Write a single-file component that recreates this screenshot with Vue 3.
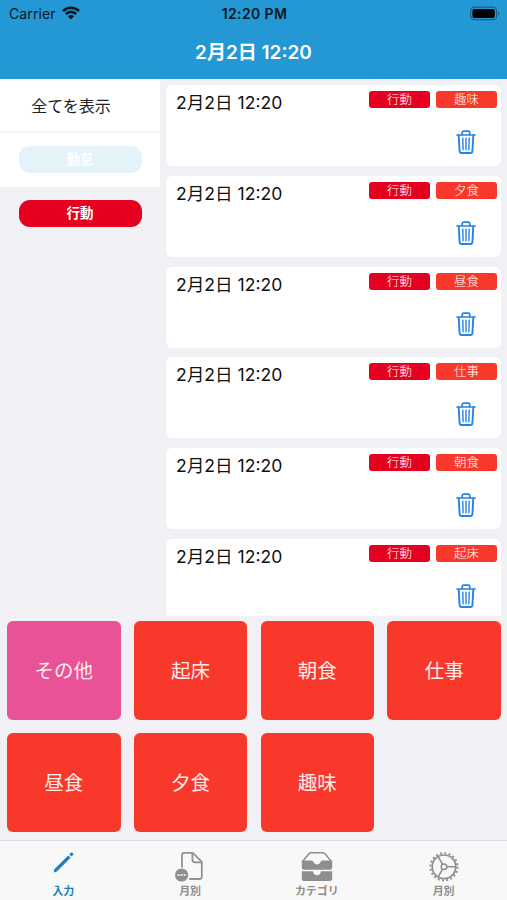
<template>
  <div class="phone">
    <header class="header">
      <div class="status">
        <div class="carrier">
          <span>Carrier</span>
          <svg class="wifi" viewBox="0 0 18 14">
            <path d="M1 5a11.300 11.300 0 0 1 16 0M3.800 8a7.400 7.400 0 0 1 10.400 0" fill="none" stroke="#071822" stroke-width="2.600" />
            <path d="M5.900 10.200a4.400 4.400 0 0 1 6.200 0L9 13.400z" fill="#071822" />
          </svg>
        </div>
        <span class="clock">12:20 PM</span>
        <svg class="battery" viewBox="0 0 30 14">
          <rect x="0.6" y="0.1" width="26" height="12.6" rx="3.8" fill="none" stroke="#17618a" stroke-width="1.2" />
          <rect x="2.4" y="1.9" width="22.4" height="9" rx="2" fill="#000" />
          <path d="M28 4.500v4c1.6-.6 1.6-3.4 0-4z" fill="#17618a" />
        </svg>
      </div>
      <h1 class="title">2月2日 12:20</h1>
    </header>

    <main class="main">
      <aside class="side">
        <button class="side-row all" @click="selected = ''">全てを表示</button>
        <button
          v-for="g in groups"
          :key="g.name"
          class="side-row"
          :class="g.type"
          @click="selected = g.name"
        >
          <span class="pill">{{ g.name }}</span>
        </button>
      </aside>

      <section class="list">
        <article v-for="r in shownRecords" :key="r.id" class="card">
          <span class="date">{{ r.date }}</span>
          <div class="right">
            <div class="tags">
              <span class="tag group">{{ r.group }}</span>
              <span class="tag">{{ r.name }}</span>
            </div>
            <button class="trash" aria-label="削除" @click="removeRecord(r.id)">
              <svg viewBox="0 0 20 24" fill="none" stroke="#2583e4" stroke-linecap="round" stroke-linejoin="round">
                <path d="M1 5h18" stroke-width="1.7" />
                <path d="M6.2 4.6V2.8Q6.2 1.2 7.8 1.2h4.4q1.6 0 1.600 1.600v1.800" stroke-width="1.7" />
                <path d="M2.7 5.400l.9 15.600q.1 2 2 2h8.8q1.9 0 2-2l.9-15.600" stroke-width="1.9" />
                <path d="M6.8 8.2l.3 11.6M10 8.2v11.6M13.2 8.2l-.3 11.6" stroke-width="1.4" />
              </svg>
            </button>
          </div>
        </article>
      </section>
    </main>

    <section class="tiles">
      <button
        v-for="a in actions"
        :key="a"
        class="tile"
        :class="{ other: a === 'その他' }"
        @click="addRecord(a)"
      >{{ a }}</button>
    </section>

    <nav class="tabbar">
      <a class="tab active">
        <svg viewBox="0 0 32 32">
          <path d="M6.600 25.400L7.400 22.200 21.200 8.400l2.400 2.400L9.800 24.400z" fill="#1580c3" />
          <path d="M22.300 7.300l1.500-1.500q1-.8 2 .2t.2 2L24.500 9.500z" fill="#1580c3" />
        </svg>
        <span>入力</span>
      </a>
      <a class="tab">
        <svg viewBox="0 0 32 32" fill="none" stroke="#929292" stroke-width="1.8">
          <path d="M8 20.600V8.200q0-2.400 2.400-2.400h8.400l9 9v15q0 2.200-2.400 2.200H15.200" />
          <path d="M18.400 6v6.600q0 2.800 2.800 2.800h6.400" />
          <circle cx="7.600" cy="28" r="6.600" fill="#8e8e8e" stroke="none" />
          <path d="M3.500 28h2M6.600 28h2M9.700 28h2" stroke="#e4e4e4" />
        </svg>
        <span>月別</span>
      </a>
      <a class="tab">
        <svg viewBox="0 0 32 32" fill="#8e8e8e">
          <path d="M1.800 14.200L8.200 6.600q.7-.8 1.800-.8h12q1.100 0 1.800.8l6.400 7.600" fill="none" stroke="#8e8e8e" stroke-width="1.500" />
          <path d="M.8 13.600h9.700q1.300 0 1.900 1.300 1.400 2.500 3.600 2.500t3.600-2.500q.6-1.300 1.900-1.300h9.700v6.300q0 2.900-2.900 2.900H3.700q-2.900 0-2.900-2.900z" />
          <path d="M.8 24.200h11.200q.6 4 4 4t4-4h11.200v7q0 2.900-2.900 2.900H3.700q-2.900 0-2.900-2.900z" />
        </svg>
        <span>カテゴリ</span>
      </a>
      <a class="tab">
        <svg viewBox="0 0 32 32" fill="none" stroke="#8e8e8e">
          <circle cx="16" cy="19.800" r="13.600" stroke-width="2" stroke-dasharray="1.900 2.372" />
          <circle cx="16" cy="19.800" r="11.800" stroke-width="1.700" />
          <circle cx="16" cy="19.800" r="2.800" stroke-width="1.500" />
          <path d="M18.800 19.800h9M14.600 17.400l-4.500-7.800M14.600 22.200l-4.500 7.800" stroke-width="1.600" />
        </svg>
        <span>月別</span>
      </a>
    </nav>
  </div>
</template>

<script setup>
import { ref, computed } from 'vue'

const now = '2月2日 12:20'

const groups = [
  { name: '勤怠', type: 'faded' },
  { name: '行動', type: 'red' }
]
const actions = ['その他', '起床', '朝食', '仕事', '昼食', '夕食', '趣味']

const selected = ref('')
const records = ref(
  ['趣味', '夕食', '昼食', '仕事', '朝食', '起床'].map((name, i) => ({
    id: i, date: now, group: '行動', name
  }))
)
let nextId = 6

const shownRecords = computed(() =>
  selected.value ? records.value.filter((r) => r.group === selected.value) : records.value
)

function addRecord(name){
  records.value.unshift({ id: nextId++, date: now, group: '行動', name })
}

function removeRecord(id){
  records.value = records.value.filter((r) => r.id !== id)
}
</script>

<style>
body{ margin:0; background:#f0f0f5 }
</style>

<style scoped>
.phone{
  width:507px;
  height:900px;
  display:flex;
  flex-direction:column;
  overflow:hidden;
  background:#f0f0f5;
  color:#111;
  font-family:Inter, "Noto Sans CJK JP", sans-serif;
}
button{
  border:none;
  padding:0;
  margin:0;
  background:none;
  font-family:inherit;
  color:inherit;
  cursor:pointer;
}
svg{ display:block; overflow:visible }

.header{
  flex:none;
  height:79px;
  background:#2497d5;
}
.status{
  height:27px;
  padding:0 7px 0 9px;
  display:grid;
  grid-template-columns:1fr auto 1fr;
  align-items:center;
  color:#071822;
}
.carrier{ display:flex; align-items:center; gap:6px; font-size:14px; letter-spacing:.1px }
.wifi{ width:18px; height:14px; margin-bottom:2px }
.clock{ font-size:14px; font-weight:600; letter-spacing:.4px }
.battery{ width:30px; height:14px; justify-self:end }
.title{
  margin:0;
  line-height:52px;
  text-align:center;
  font-size:19px;
  font-weight:600;
  color:#fff;
}

.main{
  flex:none;
  height:537px;
  display:flex;
  overflow:hidden;
}
.side{ width:160px; flex:none }
.side-row{
  display:flex;
  align-items:center;
  justify-content:center;
  width:160px;
  height:54px;
  box-sizing:border-box;
}
.side-row.all{
  padding:0 18px 1px 0;
  background:#fff;
  border-bottom:2px solid #f4f4f6;
  font-size:16px;
  color:#222;
}
.side-row.faded{ background:#fff }
.pill{
  width:123px;
  height:27px;
  line-height:26px;
  margin-bottom:1px;
  border-radius:11px;
  font-size:13.5px;
  font-weight:700;
  color:#fff;
}
.faded .pill{ background:#e4f2fa }
.red .pill{ background:#e60020 }

.list{
  flex:1;
  padding:6px 6px 0;
  display:flex;
  flex-direction:column;
  gap:9.8px;
}
.card{
  flex:none;
  height:81px;
  box-sizing:border-box;
  padding:6px 4px 0 10px;
  display:flex;
  justify-content:space-between;
  background:#fff;
  border-radius:6px;
}
.date{ font-size:17.6px; line-height:24px }
.right{ display:flex; flex-direction:column; align-items:flex-end }
.tags{ display:flex; gap:6px }
.tag{
  width:61px;
  height:17px;
  line-height:17px;
  border-radius:3px;
  text-align:center;
  font-size:12.5px;
  font-weight:300;
  color:#fff;
  background:#f8382a;
}
.tag.group{ background:#e60020 }
.trash{ margin:22px 21px 0 0 }
.trash svg{ width:20px; height:24px }

.tiles{
  flex:none;
  height:224px;
  box-sizing:border-box;
  padding:5.4px 6px 0 7px;
  display:grid;
  grid-template-columns:repeat(4, 113.5px);
  grid-auto-rows:99px;
  gap:12.2px 13.3px;
}
.tile{
  padding-bottom:2px;
  border-radius:6px;
  background:#f8382a;
  color:#ffeceb;
  font-size:19.5px;
  font-weight:400;
}
.tile.other{ background:#e95296 }

.tabbar{
  flex:1;
  display:grid;
  grid-template-columns:repeat(4, 1fr);
  background:#f8f8f8;
  border-top:1px solid #dcdcdf;
}
.tab{
  display:flex;
  flex-direction:column;
  align-items:center;
  font-size:11px;
  font-weight:600;
  line-height:14px;
  color:#8e8e8e;
}
.tab svg{ width:32px; height:32px; margin:6px 0 5px }
.tab.active{ color:#1580c3; font-weight:700 }
</style>
